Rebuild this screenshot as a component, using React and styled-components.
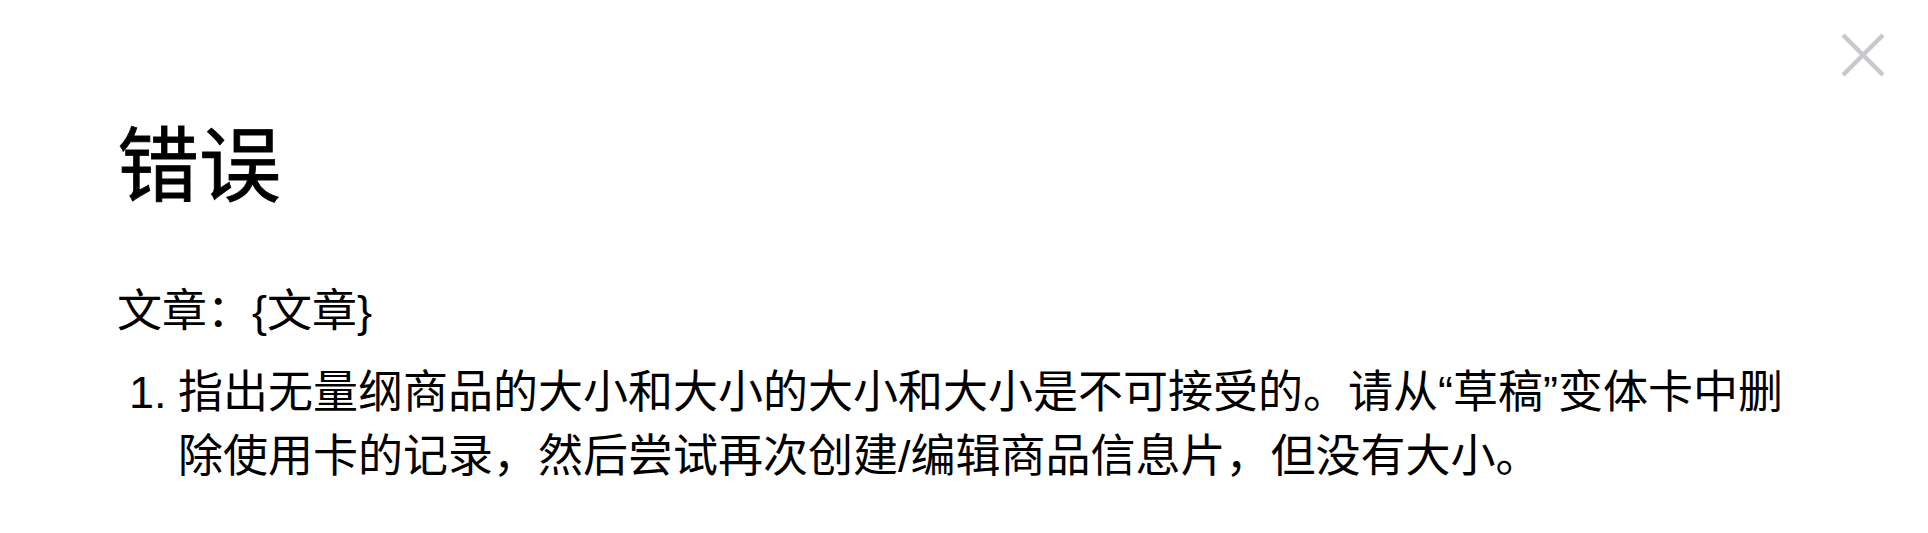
import React from 'react';
import styled, { createGlobalStyle } from 'styled-components';

const GlobalStyle = createGlobalStyle`
  html, body {
    margin: 0;
    padding: 0;
    background: #fff;
  }
  body {
    font-family: "Liberation Sans", "Noto Sans CJK SC", sans-serif;
    color: #000;
  }
`;

const Dialog = styled.div`
  position: relative;
  width: 1928px;
  height: 533px;
  box-sizing: border-box;
  padding: 118px 123px 0 117px;
  background: #fff;
`;

const CloseButton = styled.button`
  position: absolute;
  top: 33px;
  right: 43px;
  width: 44px;
  height: 44px;
  padding: 0;
  border: none;
  background: transparent;
  cursor: pointer;
  display: flex;
  align-items: center;
  justify-content: center;
`;

const Title = styled.h1`
  margin: 0;
  font-size: 82px;
  line-height: 98px;
  font-weight: 400;
  -webkit-text-stroke: 0.8px #000;
`;

const Field = styled.p`
  margin: 64px 0 0;
  font-size: 45px;
  line-height: 64px;
`;

const Issues = styled.ol`
  list-style: none;
  margin: 17px 0 0;
  padding: 0;
`;

const Issue = styled.li`
  display: grid;
  grid-template-columns: 61px 1fr;
  font-size: 45px;
  line-height: 64px;
`;

const Marker = styled.span`
  padding-left: 12px;
`;

const issues = [
  '指出无量纲商品的大小和大小的大小和大小是不可接受的。请从“草稿”变体卡中删除使用卡的记录，然后尝试再次创建/编辑商品信息片，但没有大小。',
];

export default function App() {
  return (
    <>
      <GlobalStyle />
      <Dialog>
        <CloseButton aria-label="关闭">
          <svg width="44" height="44" viewBox="0 0 44 44">
            <path
              d="M2 2 L42 42 M42 2 L2 42"
              stroke="#c8c8cd"
              strokeWidth="4.5"
              strokeLinecap="butt"
            />
          </svg>
        </CloseButton>
        <Title>错误</Title>
        <Field>文章：{'{文章}'}</Field>
        <Issues>
          {issues.map((text, i) => (
            <Issue key={i}>
              <Marker>{i + 1}.</Marker>
              <span>{text}</span>
            </Issue>
          ))}
        </Issues>
      </Dialog>
    </>
  );
}
